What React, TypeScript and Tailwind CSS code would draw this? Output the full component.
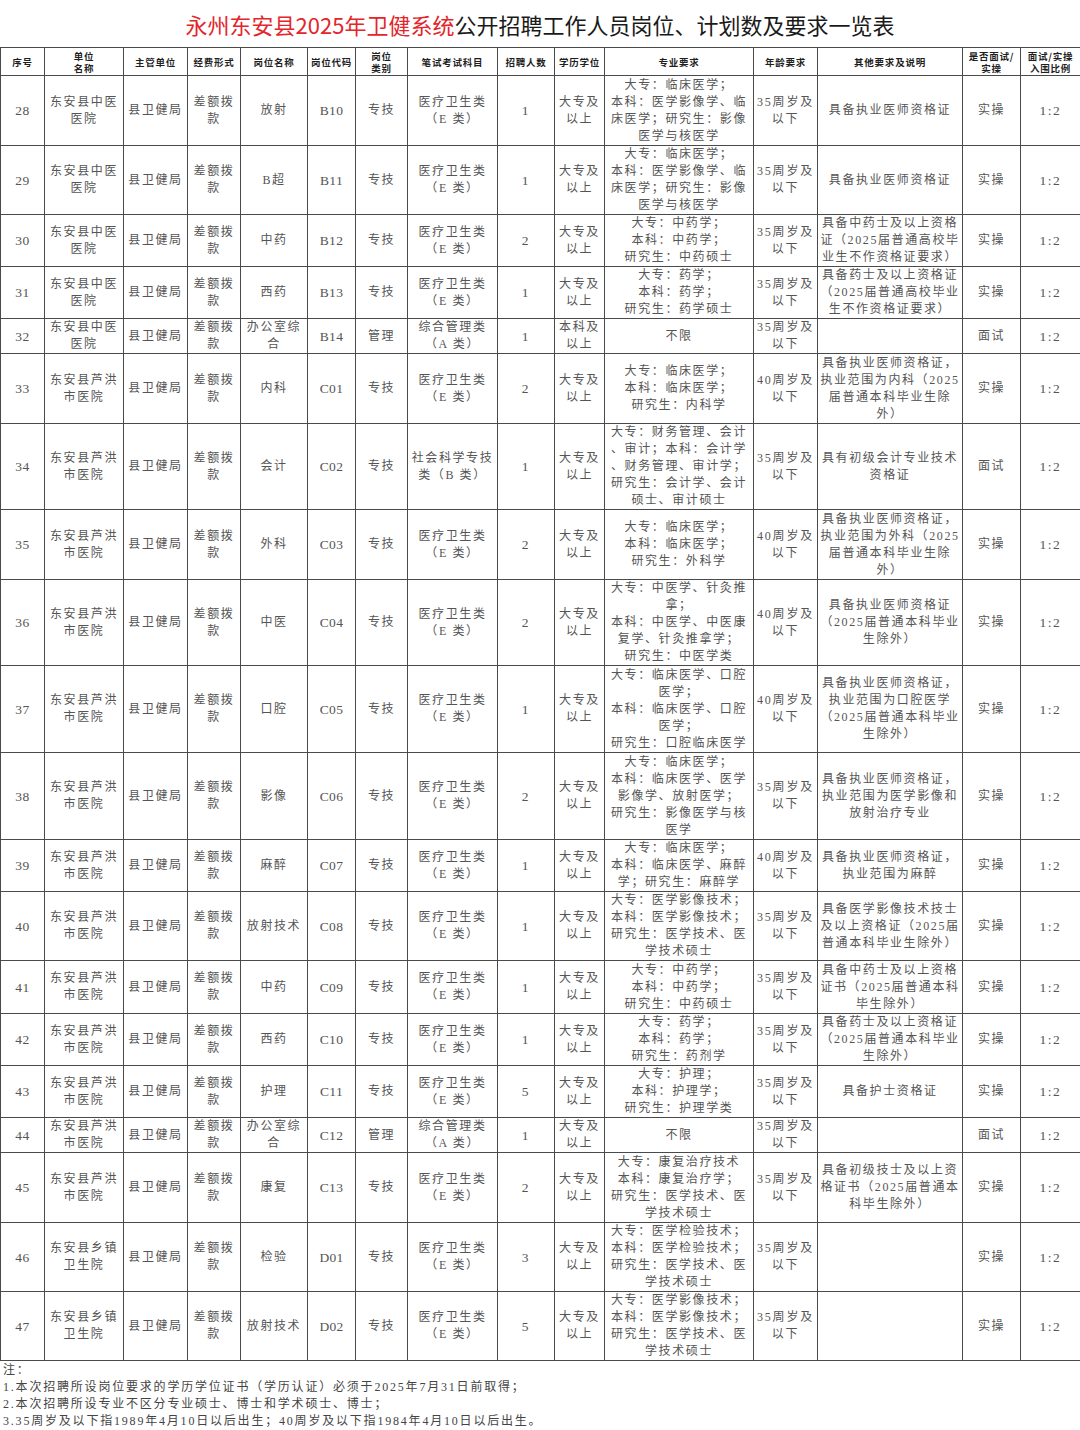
type Row = {
  no: string;
  unit: string[];
  name: string[];
  code: string;
  kind: string;
  exam: string[];
  num: string;
  edu: string[];
  spec: string[];
  age: string[];
  other: string[];
  test: string;
  h: string;
};

const colWidths = [
  "w-[44px]",
  "w-[79px]",
  "w-[64px]",
  "w-[53px]",
  "w-[67px]",
  "w-[48px]",
  "w-[52px]",
  "w-[90px]",
  "w-[57px]",
  "w-[50px]",
  "w-[149px]",
  "w-[64px]",
  "w-[145px]",
  "w-[58px]",
  "w-[60px]",
];

const headers: string[][] = [
  ["序号"],
  ["单位", "名称"],
  ["主管单位"],
  ["经费形式"],
  ["岗位名称"],
  ["岗位代码"],
  ["岗位", "类别"],
  ["笔试考试科目"],
  ["招聘人数"],
  ["学历学位"],
  ["专业要求"],
  ["年龄要求"],
  ["其他要求及说明"],
  ["是否面试/", "实操"],
  ["面试/实操", "入围比例"],
];

const zy = ["东安县中医", "医院"];
const lh = ["东安县芦洪", "市医院"];
const xz = ["东安县乡镇", "卫生院"];
const E = ["医疗卫生类", "（E 类）"];
const A = ["综合管理类", "（A 类）"];
const dz = ["大专及", "以上"];
const a35 = ["35周岁及", "以下"];
const a40 = ["40周岁及", "以下"];
const yishi = ["具备执业医师资格证"];

const rows: Row[] = [
  { no: "28", unit: zy, name: ["放射"], code: "B10", kind: "专技", exam: E, num: "1", edu: dz, spec: ["大专：临床医学；", "本科：医学影像学、临", "床医学；研究生：影像", "医学与核医学"], age: a35, other: yishi, test: "实操", h: "h-[70px]" },
  { no: "29", unit: zy, name: ["B超"], code: "B11", kind: "专技", exam: E, num: "1", edu: dz, spec: ["大专：临床医学；", "本科：医学影像学、临", "床医学；研究生：影像", "医学与核医学"], age: a35, other: yishi, test: "实操", h: "h-[68px]" },
  { no: "30", unit: zy, name: ["中药"], code: "B12", kind: "专技", exam: E, num: "2", edu: dz, spec: ["大专：中药学；", "本科：中药学；", "研究生：中药硕士"], age: a35, other: ["具备中药士及以上资格", "证（2025届普通高校毕", "业生不作资格证要求）"], test: "实操", h: "h-[52px]" },
  { no: "31", unit: zy, name: ["西药"], code: "B13", kind: "专技", exam: E, num: "1", edu: dz, spec: ["大专：药学；", "本科：药学；", "研究生：药学硕士"], age: a35, other: ["具备药士及以上资格证", "（2025届普通高校毕业", "生不作资格证要求）"], test: "实操", h: "h-[52px]" },
  { no: "32", unit: zy, name: ["办公室综", "合"], code: "B14", kind: "管理", exam: A, num: "1", edu: ["本科及", "以上"], spec: ["不限"], age: a35, other: [], test: "面试", h: "h-[35px]" },
  { no: "33", unit: lh, name: ["内科"], code: "C01", kind: "专技", exam: E, num: "2", edu: dz, spec: ["大专：临床医学；", "本科：临床医学；", "研究生：内科学"], age: a40, other: ["具备执业医师资格证，", "执业范围为内科（2025", "届普通本科毕业生除", "外）"], test: "实操", h: "h-[70px]" },
  { no: "34", unit: lh, name: ["会计"], code: "C02", kind: "专技", exam: ["社会科学专技", "类（B 类）"], num: "1", edu: dz, spec: ["大专：财务管理、会计", "、审计；本科：会计学", "、财务管理、审计学；", "研究生：会计学、会计", "硕士、审计硕士"], age: a35, other: ["具有初级会计专业技术", "资格证"], test: "面试", h: "h-[86px]" },
  { no: "35", unit: lh, name: ["外科"], code: "C03", kind: "专技", exam: E, num: "2", edu: dz, spec: ["大专：临床医学；", "本科：临床医学；", "研究生：外科学"], age: a40, other: ["具备执业医师资格证，", "执业范围为外科（2025", "届普通本科毕业生除", "外）"], test: "实操", h: "h-[70px]" },
  { no: "36", unit: lh, name: ["中医"], code: "C04", kind: "专技", exam: E, num: "2", edu: dz, spec: ["大专：中医学、针灸推", "拿；", "本科：中医学、中医康", "复学、针灸推拿学；", "研究生：中医学类"], age: a40, other: ["具备执业医师资格证", "（2025届普通本科毕业", "生除外）"], test: "实操", h: "h-[86px]" },
  { no: "37", unit: lh, name: ["口腔"], code: "C05", kind: "专技", exam: E, num: "1", edu: dz, spec: ["大专：临床医学、口腔", "医学；", "本科：临床医学、口腔", "医学；", "研究生：口腔临床医学"], age: a40, other: ["具备执业医师资格证，", "执业范围为口腔医学", "（2025届普通本科毕业", "生除外）"], test: "实操", h: "h-[87px]" },
  { no: "38", unit: lh, name: ["影像"], code: "C06", kind: "专技", exam: E, num: "2", edu: dz, spec: ["大专：临床医学；", "本科：临床医学、医学", "影像学、放射医学；", "研究生：影像医学与核", "医学"], age: a35, other: ["具备执业医师资格证，", "执业范围为医学影像和", "放射治疗专业"], test: "实操", h: "h-[87px]" },
  { no: "39", unit: lh, name: ["麻醉"], code: "C07", kind: "专技", exam: E, num: "1", edu: dz, spec: ["大专：临床医学；", "本科：临床医学、麻醉", "学；研究生：麻醉学"], age: a40, other: ["具备执业医师资格证，", "执业范围为麻醉"], test: "实操", h: "h-[52px]" },
  { no: "40", unit: lh, name: ["放射技术"], code: "C08", kind: "专技", exam: E, num: "1", edu: dz, spec: ["大专：医学影像技术；", "本科：医学影像技术；", "研究生：医学技术、医", "学技术硕士"], age: a35, other: ["具备医学影像技术技士", "及以上资格证（2025届", "普通本科毕业生除外）"], test: "实操", h: "h-[68px]" },
  { no: "41", unit: lh, name: ["中药"], code: "C09", kind: "专技", exam: E, num: "1", edu: dz, spec: ["大专：中药学；", "本科：中药学；", "研究生：中药硕士"], age: a35, other: ["具备中药士及以上资格", "证书（2025届普通本科", "毕生除外）"], test: "实操", h: "h-[53px]" },
  { no: "42", unit: lh, name: ["西药"], code: "C10", kind: "专技", exam: E, num: "1", edu: dz, spec: ["大专：药学；", "本科：药学；", "研究生：药剂学"], age: a35, other: ["具备药士及以上资格证", "（2025届普通本科毕业", "生除外）"], test: "实操", h: "h-[52px]" },
  { no: "43", unit: lh, name: ["护理"], code: "C11", kind: "专技", exam: E, num: "5", edu: dz, spec: ["大专：护理；", "本科：护理学；", "研究生：护理学类"], age: a35, other: ["具备护士资格证"], test: "实操", h: "h-[52px]" },
  { no: "44", unit: lh, name: ["办公室综", "合"], code: "C12", kind: "管理", exam: A, num: "1", edu: dz, spec: ["不限"], age: a35, other: [], test: "面试", h: "h-[34px]" },
  { no: "45", unit: lh, name: ["康复"], code: "C13", kind: "专技", exam: E, num: "2", edu: dz, spec: ["大专：康复治疗技术", "本科：康复治疗学；", "研究生：医学技术、医", "学技术硕士"], age: a35, other: ["具备初级技士及以上资", "格证书（2025届普通本", "科毕生除外）"], test: "实操", h: "h-[70px]" },
  { no: "46", unit: xz, name: ["检验"], code: "D01", kind: "专技", exam: E, num: "3", edu: dz, spec: ["大专：医学检验技术；", "本科：医学检验技术；", "研究生：医学技术、医", "学技术硕士"], age: a35, other: [], test: "实操", h: "h-[69px]" },
  { no: "47", unit: xz, name: ["放射技术"], code: "D02", kind: "专技", exam: E, num: "5", edu: dz, spec: ["大专：医学影像技术；", "本科：医学影像技术；", "研究生：医学技术、医", "学技术硕士"], age: a35, other: [], test: "实操", h: "h-[69px]" },
];

function Cell({ lines, cls = "" }: { lines: string[]; cls?: string }) {
  return (
    <td className={`border border-[#4a4a4a] p-0 text-center align-middle ${cls}`}>
      {lines.map((l, i) => (
        <div key={i} className="whitespace-nowrap">
          {l}
        </div>
      ))}
    </td>
  );
}

export default function App() {
  return (
    <div className="w-[1080px] h-[1430px] bg-white font-['Liberation_Serif','Noto_Sans_CJK_SC',serif]">
      <div className="h-[47px] flex items-center justify-center font-['Noto_Sans_CJK_SC',sans-serif] text-[22px] leading-none">
        <span className="text-[#e4252b]">永州东安县2025年卫健系统</span>
        <span className="text-[#1a1a1a]">公开招聘工作人员岗位、计划数及要求一览表</span>
      </div>

      <table className="w-[1080px] table-fixed border-collapse">
        <colgroup>
          {colWidths.map((w, i) => (
            <col key={i} className={w} />
          ))}
        </colgroup>
        <thead>
          <tr className="h-[28px]">
            {headers.map((h, i) => (
              <th
                key={i}
                className="border border-[#4a4a4a] p-0 text-center align-middle font-['Noto_Sans_CJK_SC',sans-serif] text-[9.5px] font-bold leading-[12px] tracking-[0.8px] text-[#1f1f1f]"
              >
                {h.map((l, j) => (
                  <div key={j} className="whitespace-nowrap">
                    {l}
                  </div>
                ))}
              </th>
            ))}
          </tr>
        </thead>
        <tbody className="text-[12px] leading-[17px] tracking-[1.6px] text-[#555]">
          {rows.map((r) => (
            <tr key={r.no} className={r.h}>
              <Cell lines={[r.no]} cls="text-[13.5px] tracking-[0.5px]" />
              <Cell lines={r.unit} />
              <Cell lines={["县卫健局"]} />
              <Cell lines={["差额拨", "款"]} />
              <Cell lines={r.name} />
              <Cell lines={[r.code]} cls="text-[13.5px] tracking-[0.3px]" />
              <Cell lines={[r.kind]} />
              <Cell lines={r.exam} />
              <Cell lines={[r.num]} cls="text-[13.5px]" />
              <Cell lines={r.edu} />
              <Cell lines={r.spec} />
              <Cell lines={r.age} cls="tracking-[1.8px]" />
              <Cell lines={r.other} />
              <Cell lines={[r.test]} />
              <Cell lines={["1:2"]} cls="text-[13.5px] tracking-[1.5px]" />
            </tr>
          ))}
        </tbody>
      </table>

      <div className="px-[3px] pt-[1px] text-[12px] leading-[17px] tracking-[1.8px] text-[#444]">
        <div>注：</div>
        <div>1.本次招聘所设岗位要求的学历学位证书（学历认证）必须于2025年7月31日前取得；</div>
        <div>2.本次招聘所设专业不区分专业硕士、博士和学术硕士、博士；</div>
        <div>3.35周岁及以下指1989年4月10日以后出生；40周岁及以下指1984年4月10日以后出生。</div>
      </div>
    </div>
  );
}
